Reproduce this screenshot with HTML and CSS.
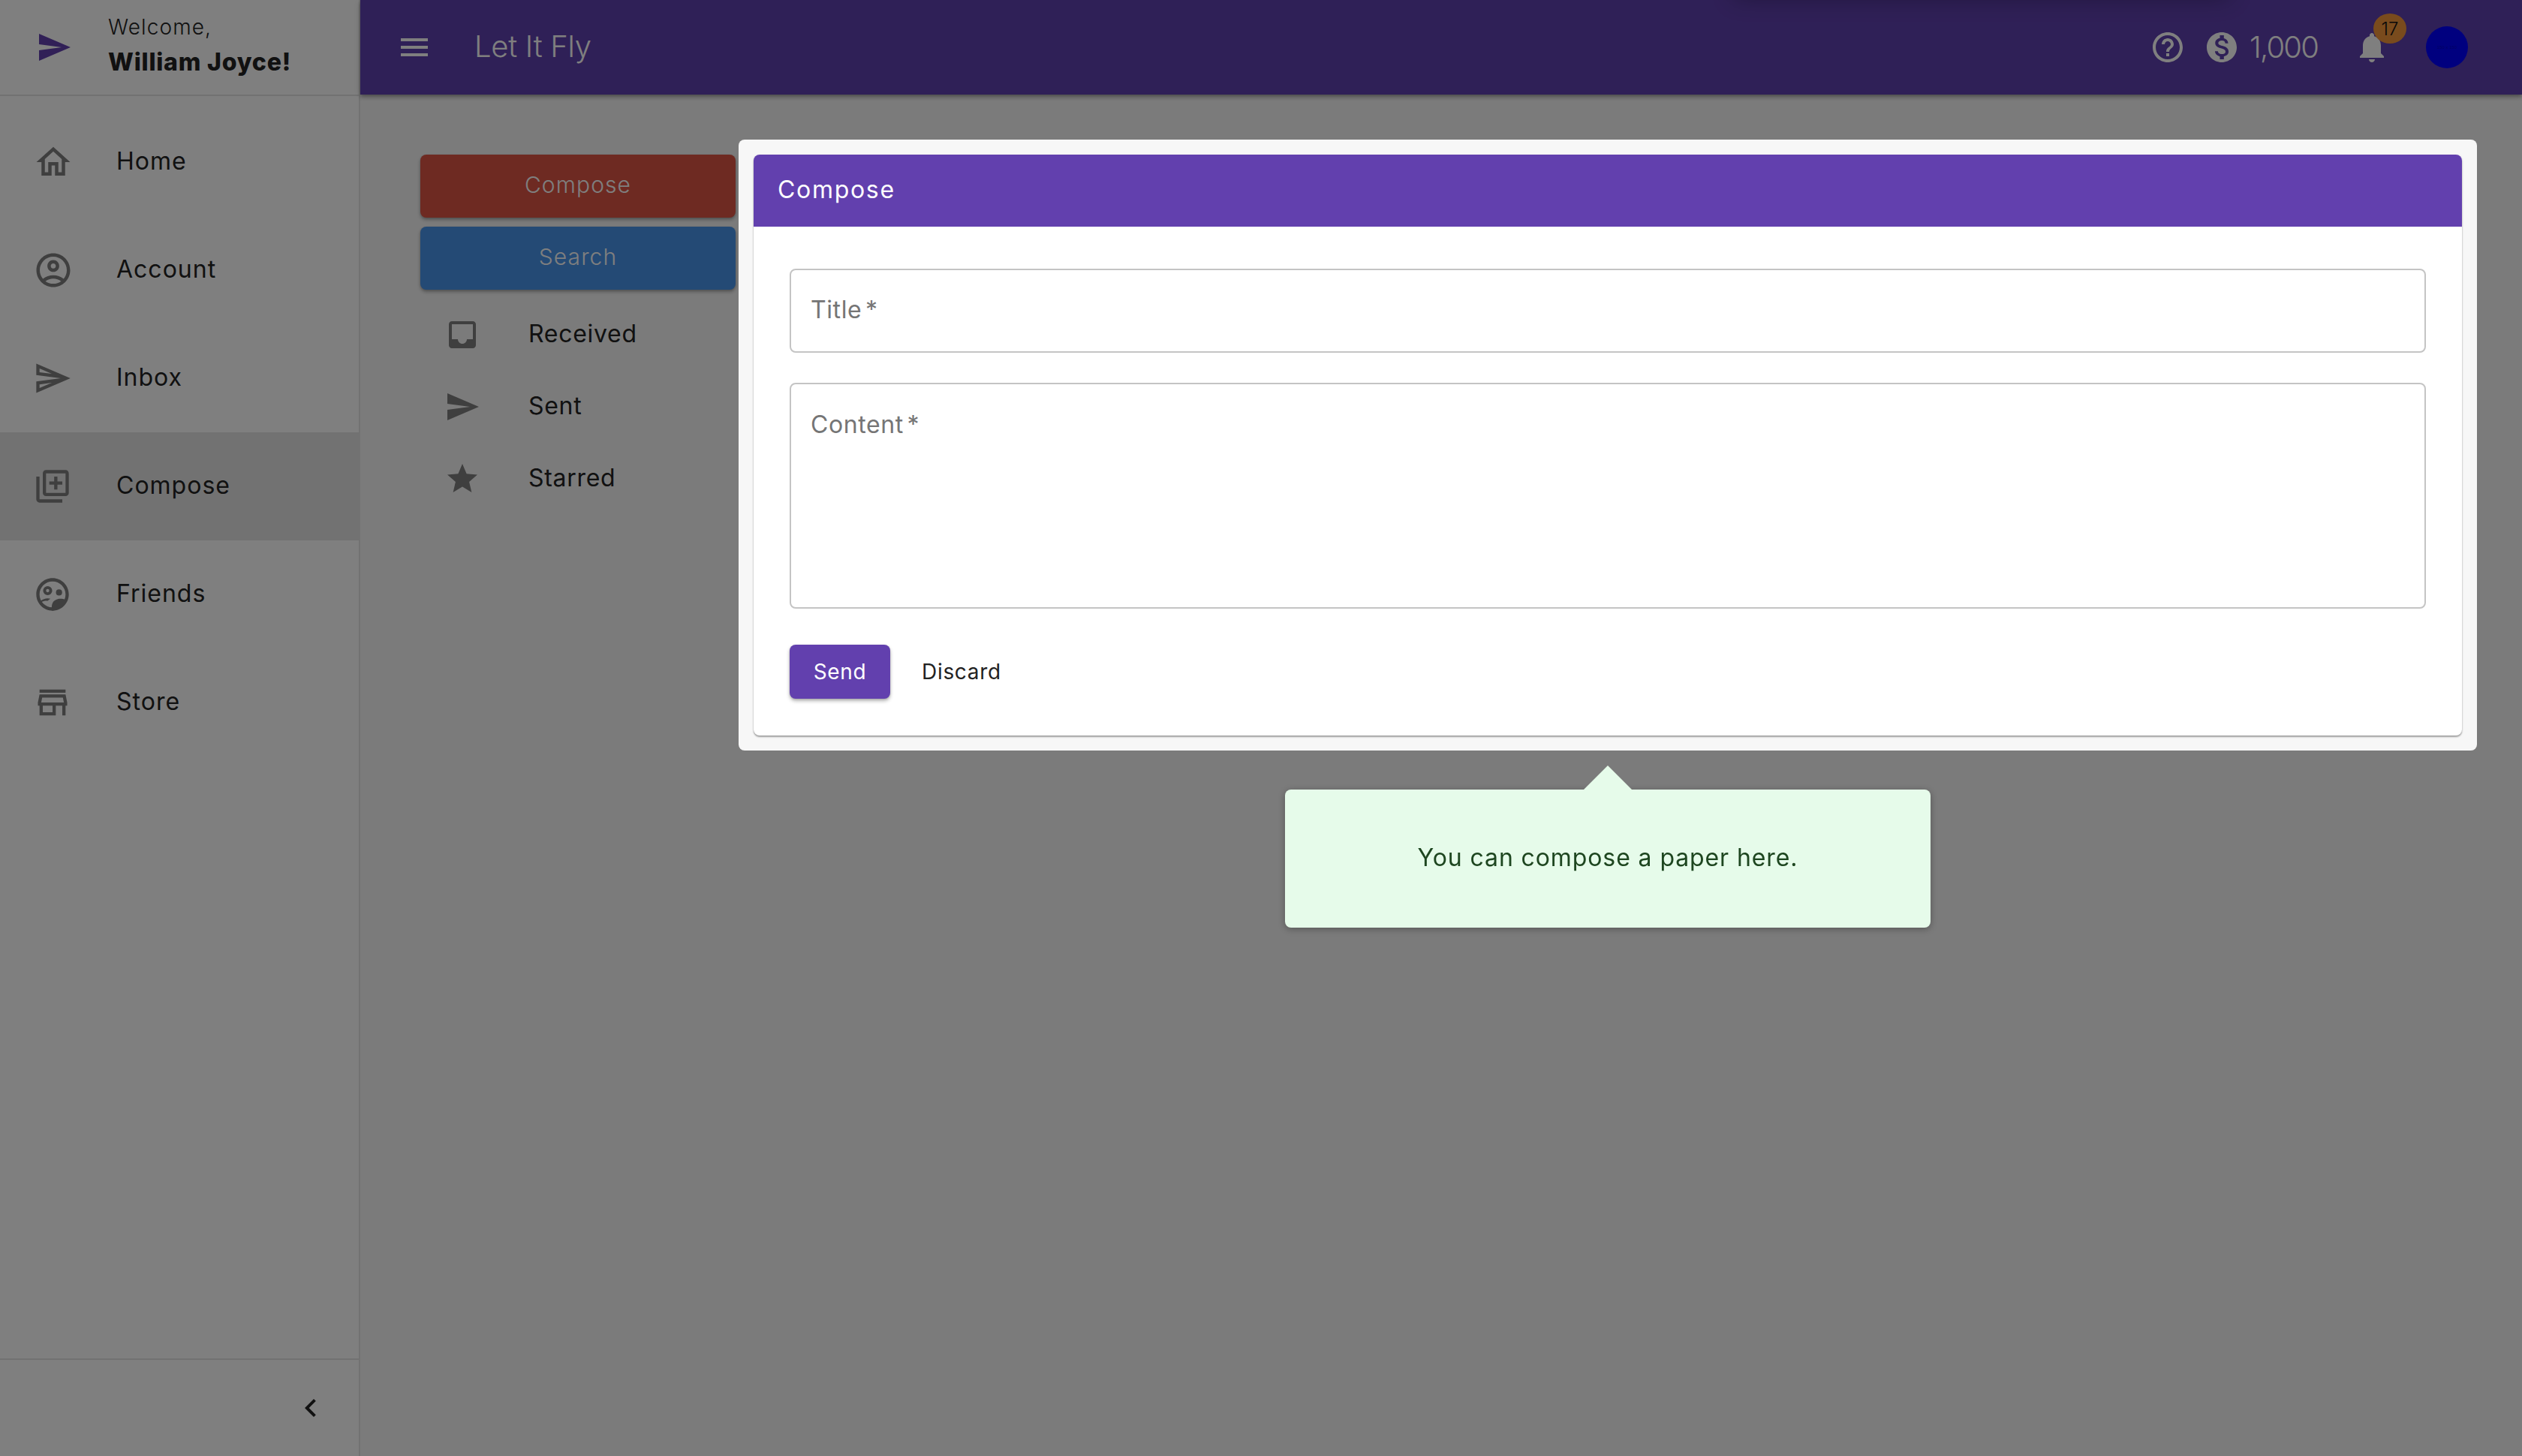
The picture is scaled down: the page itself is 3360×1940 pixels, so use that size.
FILE: index.html
```html
<!DOCTYPE html>
<html lang="en">
<head>
<meta charset="utf-8">
<title>Let It Fly</title>
<link rel="stylesheet" href="styles.css">
</head>
<body>
<div class="app">
  <aside class="sidebar">
    <div class="brand">
      <svg class="brand-logo" viewBox="0 0 24 24"><path d="M2.01 21L23 12 2.01 3 2 10l15 2-15 2z"/></svg>
      <div class="brand-text">
        <div class="welcome">Welcome,</div>
        <div class="username">William Joyce!</div>
      </div>
    </div>
    <nav class="nav">
      <a class="nav-item"><svg class="nav-icon nav-icon-lg" viewBox="0 0 24 24"><path d="M12 5.69l5 4.5V18h-2v-6H9v6H7v-7.81l5-4.5M12 3L2 12h3v8h6v-6h2v6h6v-8h3L12 3z"/></svg><span>Home</span></a>
      <a class="nav-item"><svg class="nav-icon nav-icon-lg" viewBox="0 0 24 24"><path d="M12 2C6.48 2 2 6.48 2 12s4.48 10 10 10 10-4.48 10-10S17.52 2 12 2zM7.35 18.5C8.66 17.56 10.26 17 12 17s3.34.56 4.65 1.5c-1.31.94-2.91 1.5-4.65 1.5s-3.34-.56-4.65-1.5zm10.79-1.38C16.45 15.8 14.32 15 12 15s-4.45.8-6.14 2.12C4.7 15.73 4 13.95 4 12c0-4.42 3.58-8 8-8s8 3.58 8 8c0 1.95-.7 3.73-1.86 5.12zM12 6c-1.93 0-3.5 1.57-3.5 3.5S10.07 13 12 13s3.5-1.57 3.5-3.5S13.93 6 12 6zm0 5c-.83 0-1.5-.67-1.5-1.5S11.17 8 12 8s1.5.67 1.5 1.5S12.83 11 12 11z"/></svg><span>Account</span></a>
      <a class="nav-item"><svg class="nav-icon" viewBox="0 0 24 24"><path d="M4.01 6.03l7.51 3.22-7.52-1 .01-2.22m7.5 8.72L4 17.97v-2.22l7.51-1M2.01 3L2 10l15 2-15 2 .01 7L23 12 2.01 3z"/></svg><span>Inbox</span></a>
      <a class="nav-item is-active"><svg class="nav-icon" viewBox="0 0 24 24"><path d="M4 6H2v14c0 1.1.9 2 2 2h14v-2H4V6zm16-4H8c-1.1 0-2 .9-2 2v12c0 1.1.9 2 2 2h12c1.1 0 2-.9 2-2V4c0-1.1-.9-2-2-2zm0 14H8V4h12v12zm-7-2h2v-3h3V9h-3V6h-2v3h-3v2h3z"/></svg><span>Compose</span></a>
      <a class="nav-item"><svg class="nav-icon" viewBox="0 0 24 24"><path fill-rule="evenodd" d="M12 2C6.48 2 2 6.48 2 12s4.48 10 10 10 10-4.48 10-10S17.52 2 12 2zm0 18c-4.41 0-8-3.59-8-8s3.59-8 8-8 8 3.59 8 8-3.59 8-8 8zM9 6.9a2.8 2.8 0 1 0 0 5.6 2.8 2.8 0 0 0 0-5.6zm0 1.8a1 1 0 1 1 0 2 1 1 0 0 1 0-2z"/><circle cx="16" cy="10.8" r="1.9"/><path d="M11.6 22c-.2-2-.2-3.8.6-5 .9-1.5 3-2.3 4.6-2.3 1 0 2.2.2 3.4.7A10 10 0 0 1 11.6 22zM4.8 15.9c1-.9 2.7-1.5 4.2-1.5.6 0 1.2.1 1.7.2-.6.4-1.1.8-1.6 1.3-1.7-.1-3 .2-3.9.8z"/></svg><span>Friends</span></a>
      <a class="nav-item"><svg class="nav-icon" viewBox="0 0 24 24"><path d="M20 4H4v2h16V4zm1 10v-2l-1-5H4l-1 5v2h1v6h10v-6h4v6h2v-6h1zm-9 4H6v-4h6v4zm-6.96-6l.6-3h12.72l.6 3H5.04z"/></svg><span>Store</span></a>
    </nav>
    <div class="sidebar-foot">
      <svg class="chevron" viewBox="0 0 24 24"><path d="M15.41 7.41L14 6l-6 6 6 6 1.41-1.41L10.83 12z"/></svg>
    </div>
  </aside>

  <div class="main">
    <header class="topbar">
      <div class="stray-shadow"></div>
      <svg class="top-icon" viewBox="0 0 24 24"><path d="M3 18h18v-2H3v2zm0-5h18v-2H3v2zm0-7v2h18V6H3z"/></svg>
      <div class="app-title">Let It Fly</div>
      <div class="top-actions">
        <svg class="top-icon" viewBox="0 0 24 24"><path d="M11 18h2v-2h-2v2zm1-16C6.48 2 2 6.48 2 12s4.48 10 10 10 10-4.48 10-10S17.52 2 12 2zm0 18c-4.41 0-8-3.59-8-8s3.59-8 8-8 8 3.59 8 8-3.59 8-8 8zm0-14c-2.21 0-4 1.79-4 4h2c0-1.1.9-2 2-2s2 .9 2 2c0 2-3 1.75-3 5h2c0-2.25 3-2.5 3-5 0-2.21-1.79-4-4-4z"/></svg>
        <svg class="top-icon coin" viewBox="0 0 24 24"><path d="M12 2C6.48 2 2 6.48 2 12s4.48 10 10 10 10-4.48 10-10S17.52 2 12 2zm1.41 16.09V20h-2.67v-1.93c-1.71-.36-3.16-1.46-3.27-3.4h1.96c.1 1.05.82 1.87 2.65 1.87 1.96 0 2.4-.98 2.4-1.59 0-.83-.44-1.61-2.67-2.14-2.48-.6-4.18-1.62-4.18-3.67 0-1.72 1.39-2.84 3.11-3.21V4h2.67v1.95c1.86.45 2.79 1.86 2.87 3.39H14.3c-.05-1.11-.64-1.87-2.22-1.87-1.5 0-2.4.68-2.4 1.64 0 .84.65 1.39 2.67 1.91s4.18 1.39 4.18 3.91c-.01 1.83-1.38 2.83-3.12 3.16z"/></svg>
        <div class="balance">1,000</div>
        <div class="bell">
          <svg class="top-icon" viewBox="0 0 24 24"><path d="M12 22c1.1 0 2-.9 2-2h-4c0 1.1.89 2 2 2zm6-6v-5c0-3.07-1.64-5.64-4.5-6.32V4c0-.83-.67-1.5-1.5-1.5s-1.5.67-1.5 1.5v.68C7.63 5.36 6 7.92 6 11v5l-2 2v1h16v-1l-2-2z"/></svg>
          <span class="badge">17</span>
        </div>
        <div class="avatar">150 x 150</div>
      </div>
    </header>

    <div class="content">
      <div class="mail-col">
        <button class="action action-red">Compose</button>
        <button class="action action-blue">Search</button>
        <ul class="folders">
          <li class="folder"><svg class="folder-icon" viewBox="0 0 24 24"><path d="M19 3H4.99c-1.11 0-1.98.89-1.98 2L3 19c0 1.1.88 2 1.99 2H19c1.1 0 2-.9 2-2V5c0-1.11-.9-2-2-2zm0 12h-4c0 1.66-1.35 3-3 3s-3-1.34-3-3H4.99V5H19v10z"/></svg><span>Received</span></li>
          <li class="folder"><svg class="folder-icon" viewBox="0 0 24 24"><path d="M2.01 21L23 12 2.01 3 2 10l15 2-15 2z"/></svg><span>Sent</span></li>
          <li class="folder"><svg class="folder-icon" viewBox="0 0 24 24"><path d="M12 17.27L18.18 21l-1.64-7.03L22 9.24l-7.19-.61L12 2 9.19 8.63 2 9.24l5.46 4.73L5.82 21z"/></svg><span>Starred</span></li>
        </ul>
      </div>

      <section class="spotlight">
        <div class="card">
          <div class="card-head"><span>Compose</span></div>
          <form class="card-body">
            <div class="field field-title">Title *</div>
            <div class="field field-content">Content *</div>
            <div class="form-actions">
              <button type="button" class="btn-send">Send</button>
              <button type="button" class="btn-discard">Discard</button>
            </div>
          </form>
        </div>
        <div class="tip"><span>You can compose a paper here.</span></div>
      </section>
    </div>
  </div>
</div>
<div class="dim"></div>
</body>
</html>
```
FILE: styles.css
```css
* { box-sizing: border-box; }
html, body { margin: 0; height: 100%; overflow: hidden; }
body { font-family: Inter, "Noto Sans", sans-serif; color: #222; background: #f7f7f7; }
button { font-family: inherit; border: 0; cursor: pointer; }

.dim { position: fixed; inset: 0; background: rgba(0,0,0,.5); z-index: 10; }

.app { display: flex; height: 1940px; }

/* sidebar */
.sidebar { width: 480px; flex: none; display: flex; flex-direction: column; background: #fff; border-right: 2px solid rgba(0,0,0,.1); }
.brand { height: 128px; flex: none; display: flex; align-items: center; padding: 0 0 4px 48px; border-bottom: 2px solid rgba(0,0,0,.1); }
.brand-logo { width: 48px; height: 48px; fill: #6240ae; flex: none; margin: 4px 48px 0 0; }
.welcome { font-size: 28px; font-weight: 300; line-height: 40px; letter-spacing: 1.1px; }
.username { font-size: 32px; font-weight: 800; line-height: 46px; margin-top: 4px; letter-spacing: .8px; }

.nav { flex: 1; padding-top: 16px; }
.nav-item { height: 144px; display: grid; grid-template-columns: 111px 1fr; align-items: center; padding-left: 44px; font-size: 32px; font-weight: 400; letter-spacing: 1px; }
.nav-item span { padding-bottom: 4px; }
.nav-item.is-active { background: rgba(0,0,0,.1); }
.nav-icon { display: block; width: 52px; height: 52px; fill: #7f7f7f; }
.nav-icon-lg { width: 54px; height: 54px; }

.sidebar-foot { height: 130px; flex: none; display: flex; align-items: center; justify-content: flex-end; padding-right: 40px; border-top: 2px solid rgba(0,0,0,.1); }
.chevron { width: 48px; height: 48px; fill: #222; }

/* top bar */
.main { flex: 1; min-width: 0; display: flex; flex-direction: column; }
.topbar { height: 126px; flex: none; position: relative; z-index: 5; display: flex; align-items: center; padding: 0 72px 0 48px; color: #fff; background: #5f40ae; box-shadow: 0 2px 4px -1px rgba(0,0,0,.2), 0 4px 5px rgba(0,0,0,.18), 0 1px 10px rgba(0,0,0,.14); }
.stray-shadow { position: absolute; left: 1830px; top: -46px; width: 660px; height: 40px; box-shadow: 0 4px 30px rgba(0,0,0,.3); }
.top-icon { width: 48px; height: 48px; fill: #fff; flex: none; display: block; }
.app-title { margin-left: 56px; padding-bottom: 4px; font-size: 40px; font-weight: 300; letter-spacing: -.3px; }
.top-actions { margin-left: auto; display: flex; align-items: center; }
.coin { margin-left: 24px; }
.balance { margin-left: 13px; padding-bottom: 2px; font-size: 40px; font-weight: 300; width: 93px; letter-spacing: -1.8px; }
.bell { position: relative; margin-left: 46px; }
.badge { position: absolute; left: 26px; top: -21px; width: 44px; height: 40px; border-radius: 50%; display: flex; align-items: center; justify-content: center; background: #f3963a; color: #111; font-size: 24px; font-weight: 300; }
.avatar { width: 56px; height: 56px; margin-left: 48px; border-radius: 50%; background: #0000ff; color: #0000c8; font: 6px/56px "Liberation Sans", sans-serif; text-align: center; white-space: nowrap; }

/* content */
.content { flex: 1; display: flex; align-items: flex-start; padding: 60px 60px 0 80px; gap: 4px; }
.mail-col { width: 420px; flex: none; padding-top: 20px; display: flex; flex-direction: column; gap: 12px; }
.action { height: 84px; padding: 0 0 4px; border-radius: 8px; color: #fff; font-size: 30px; font-weight: 300; letter-spacing: 1.1px; box-shadow: 0 3px 5px rgba(0,0,0,.28), 0 1px 3px rgba(0,0,0,.14); }
.action-red { background: #dc5444; }
.action-blue { background: #4894ea; }
.folders { list-style: none; margin: 0; padding: 0; }
.folder { height: 96px; display: flex; align-items: center; padding-left: 32px; font-size: 32px; font-weight: 400; letter-spacing: .7px; }
.folder span { padding-bottom: 4px; }
.folder-icon { width: 48px; height: 48px; fill: #7f7f7f; flex: none; margin-right: 64px; }

/* highlighted panel */
.spotlight { position: relative; z-index: 20; flex: 1; min-width: 0; padding: 20px; background: #f7f7f7; border-radius: 8px; }
.card { height: 774px; background: #fff; border-radius: 8px; box-shadow: 0 2px 2px rgba(0,0,0,.3), 0 1px 3px rgba(0,0,0,.12); }
.card-head { height: 96px; padding: 0 0 4px 32px; display: flex; align-items: center; background: #6240ae; color: #fff; font-size: 32px; letter-spacing: 1.7px; border-radius: 8px 8px 0 0; }
.card-body { padding: 56px 48px 0; display: flex; flex-direction: column; }
.field { padding-left: 26px; border: 2px solid #c4c4c4; border-radius: 8px; font-size: 32px; font-weight: 400; color: #757575; letter-spacing: .6px; word-spacing: -5px; }
.field-title { height: 112px; line-height: 106px; }
.field-content { height: 301px; margin-top: 40px; padding-top: 31px; line-height: 46px; }
.form-actions { margin-top: 48px; display: flex; align-items: center; gap: 28px; }
.btn-send { width: 134px; height: 72px; border-radius: 8px; background: #6240ae; color: #fff; font-size: 28px; font-weight: 400; letter-spacing: .6px; box-shadow: 0 3px 5px rgba(0,0,0,.28), 0 1px 3px rgba(0,0,0,.14); }
.btn-discard { padding: 0 14px; height: 72px; background: none; color: #222; font-size: 28px; font-weight: 400; letter-spacing: .7px; }

.tip { position: absolute; left: 728px; top: 866px; width: 860px; height: 184px; display: flex; align-items: center; justify-content: center; background: #e6fbea; color: #1e4620; font-size: 32px; font-weight: 400; letter-spacing: .9px; border-radius: 8px; box-shadow: 0 2px 10px rgba(0,0,0,.3); }
.tip span { padding-bottom: 4px; }
.tip::before { content: ""; position: absolute; left: 398px; top: -32px; border-left: 32px solid transparent; border-right: 32px solid transparent; border-bottom: 32px solid #e6fbea; }
```
